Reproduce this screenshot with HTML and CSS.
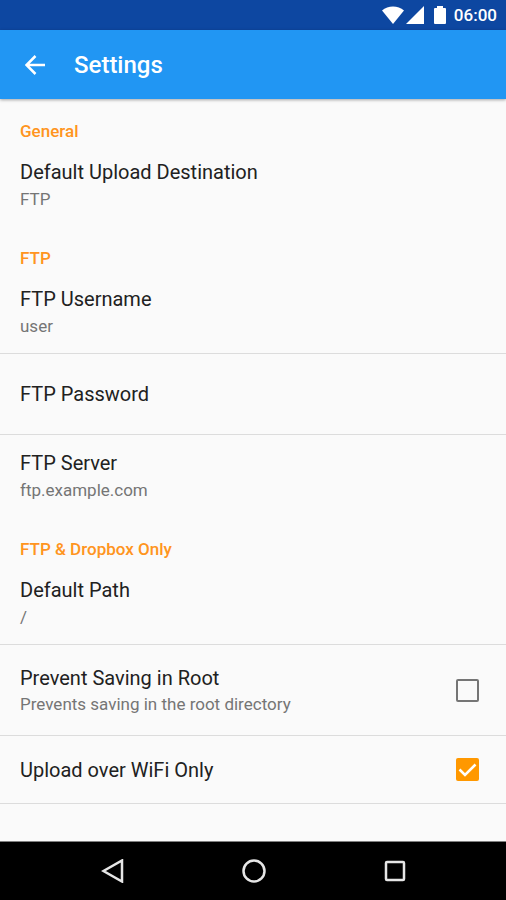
FILE: index.html
```html
<!DOCTYPE html>
<html lang="en">
<head>
<meta charset="utf-8">
<meta name="viewport" content="width=device-width, initial-scale=1">
<title>Settings</title>
<link rel="stylesheet" href="styles.css">
</head>
<body>
<div class="status-bar">
  <svg class="status-icon wifi" viewBox="0 0 22 18" aria-hidden="true"><path d="M0 4.5C3 2 7 .5 11 .5S19 2 22 4.5L11 18z"/></svg>
  <svg class="status-icon signal" viewBox="0 0 18 18" aria-hidden="true"><path d="M0 18 18 0V18z"/></svg>
  <svg class="status-icon battery" viewBox="0 0 12 18" aria-hidden="true"><path d="M3 0H9V2H11Q12 2 12 3V17Q12 18 11 18H1Q0 18 0 17V3Q0 2 1 2H3z"/></svg>
  <span class="clock">06:00</span>
</div>
<header class="app-bar">
  <button class="back" type="button" aria-label="Back">
    <svg viewBox="0 0 20 20" aria-hidden="true"><path d="M20 10H2M10.500 1 1.500 10 10.500 19"/></svg>
  </button>
  <h1>Settings</h1>
</header>
<main class="settings">
  <section>
    <h2>General</h2>
    <button class="item" type="button"><span class="title">Default Upload Destination</span><span class="summary">FTP</span></button>
  </section>
  <section>
    <h2>FTP</h2>
    <button class="item" type="button"><span class="title">FTP Username</span><span class="summary">user</span></button>
    <button class="item single" type="button"><span class="title">FTP Password</span></button>
    <button class="item" type="button"><span class="title">FTP Server</span><span class="summary">ftp.example.com</span></button>
  </section>
  <section class="closed">
    <h2>FTP &amp; Dropbox Only</h2>
    <button class="item" type="button"><span class="title">Default Path</span><span class="summary">/</span></button>
    <label class="item toggle tall">
      <span class="label"><span class="title">Prevent Saving in Root</span><span class="summary">Prevents saving in the root directory</span></span>
      <input type="checkbox">
    </label>
    <label class="item toggle">
      <span class="label"><span class="title">Upload over WiFi Only</span></span>
      <input type="checkbox" checked>
    </label>
  </section>
</main>
<nav class="nav-bar" aria-label="System">
  <button type="button" aria-label="Back"><svg viewBox="0 0 24 24" aria-hidden="true"><path d="M21 1.500V22.500L2.500 12z"/></svg></button>
  <button type="button" aria-label="Home"><svg viewBox="0 0 24 24" aria-hidden="true"><circle cx="12" cy="12" r="10.500"/></svg></button>
  <button type="button" aria-label="Recent apps"><svg viewBox="0 0 24 24" aria-hidden="true"><rect x="3" y="3" width="18" height="18" rx="1"/></svg></button>
</nav>
</body>
</html>
```
FILE: styles.css
```css
* {
  box-sizing: border-box;
}

body {
  margin: 0;
  min-height: 100vh;
  display: flex;
  flex-direction: column;
  background: #fafafa;
  color: #212121;
  font-family: Roboto, "Liberation Sans", sans-serif;
}

button {
  border: 0;
  padding: 0;
  background: none;
  color: inherit;
  font: inherit;
  text-align: left;
  cursor: pointer;
}

.status-bar {
  height: 30px;
  padding: 0 9px;
  display: flex;
  align-items: center;
  justify-content: flex-end;
  background: #0d47a1;
  color: #fff;
}

.status-icon {
  height: 18px;
  fill: #fff;
}

.wifi {
  width: 22px;
  margin-right: 2px;
}

.signal {
  width: 18px;
  margin-right: 10px;
}

.battery {
  width: 12px;
  margin-right: 8px;
}

.clock {
  font-size: 17px;
  font-weight: 500;
  line-height: 30px;
}

.app-bar {
  height: 69px;
  padding: 0 20px;
  display: flex;
  align-items: center;
  gap: 24px;
  background: #2196f3;
  color: #fff;
  box-shadow: 0 1px 3px rgba(0, 0, 0, 0.35);
}

.back {
  width: 30px;
  height: 40px;
  display: flex;
  align-items: center;
  justify-content: center;
}

.back svg {
  width: 20px;
  height: 20px;
  fill: none;
  stroke: #fff;
  stroke-width: 2.5;
}

h1 {
  margin: 0;
  font-size: 24px;
  font-weight: 500;
  line-height: 32px;
}

.settings {
  flex: 1;
}

h2 {
  margin: 0;
  padding: 19px 20px 0;
  color: #ff9420;
  font-size: 17px;
  font-weight: 500;
  line-height: 26px;
}

.item {
  width: 100%;
  padding: 14px 20px;
  display: flex;
  flex-direction: column;
}

.item + .item {
  border-top: 1px solid #dcdcdc;
}

.closed {
  border-bottom: 1px solid #dcdcdc;
}

.title {
  display: block;
  font-size: 20px;
  line-height: 28px;
}

.summary {
  display: block;
  color: #757575;
  font-size: 17px;
  line-height: 26px;
}

.single {
  min-height: 81px;
  justify-content: center;
}

.toggle {
  min-height: 68px;
  padding: 0 27px 0 20px;
  flex-direction: row;
  align-items: center;
  justify-content: space-between;
  cursor: pointer;
}

.tall {
  min-height: 91px;
}

.toggle .summary {
  line-height: 24px;
}

input {
  appearance: none;
  flex: none;
  width: 23px;
  height: 23px;
  margin: 0;
  border: 2px solid #757575;
  border-radius: 2px;
}

input:checked {
  border: 0;
  background: #ff9800 url("data:image/svg+xml,%3Csvg xmlns='http://www.w3.org/2000/svg' viewBox='0 0 23 23'%3E%3Cpath d='M3.500 11.500 9 17 19.500 6.500' fill='none' stroke='white' stroke-width='2.500'/%3E%3C/svg%3E");
}

.nav-bar {
  height: 59px;
  padding: 0 40px 0 42px;
  display: flex;
  border-top: 1px solid #808080;
  background: #000;
}

.nav-bar button {
  flex: 1;
  display: flex;
  align-items: center;
  justify-content: center;
}

.nav-bar svg {
  width: 24px;
  height: 24px;
  fill: none;
  stroke: #e6e6e6;
  stroke-width: 2.5;
}
```
